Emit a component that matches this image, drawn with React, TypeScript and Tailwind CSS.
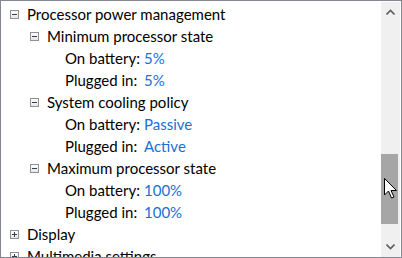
const rows: { level: number; kind: 'node' | 'leaf'; open?: boolean; label: string; value?: string }[] = [
  { level: 0, kind: 'node', open: true, label: 'Processor power management' },
  { level: 1, kind: 'node', open: true, label: 'Minimum processor state' },
  { level: 2, kind: 'leaf', label: 'On battery:', value: '5%' },
  { level: 2, kind: 'leaf', label: 'Plugged in:', value: '5%' },
  { level: 1, kind: 'node', open: true, label: 'System cooling policy' },
  { level: 2, kind: 'leaf', label: 'On battery:', value: 'Passive' },
  { level: 2, kind: 'leaf', label: 'Plugged in:', value: 'Active' },
  { level: 1, kind: 'node', open: true, label: 'Maximum processor state' },
  { level: 2, kind: 'leaf', label: 'On battery:', value: '100%' },
  { level: 2, kind: 'leaf', label: 'Plugged in:', value: '100%' },
  { level: 0, kind: 'node', open: false, label: 'Display' },
  { level: 0, kind: 'node', open: false, label: 'Multimedia settings' },
];

const ToggleBox = ({ open }: { open?: boolean }) => (
  <span className="relative flex h-[9px] w-[9px] shrink-0 items-center justify-center border border-[#919191] bg-gradient-to-b from-white to-[#e6e6e6]">
    <span className="absolute h-px w-[5px] bg-[#2f3f58]" />
    {!open && <span className="absolute h-[5px] w-px bg-[#2f3f58]" />}
  </span>
);

const indent = ['pl-[9px]', 'pl-[29px]', 'pl-[64px]'];

export default function App() {
  return (
    <div className="relative flex h-[258px] w-[402px] overflow-hidden border border-[#828790] bg-white font-['Lato',sans-serif] text-[15px] text-black">
      <div className="flex-1 pt-[2px]">
        {rows.map((r, i) => (
          <div key={i} className={`flex h-[22px] items-center whitespace-nowrap ${indent[r.level]}`}>
            {r.kind === 'node' ? (
              <>
                <ToggleBox open={r.open} />
                <span className="ml-[8px]">{r.label}</span>
              </>
            ) : (
              <>
                <span className="w-[79px]">{r.label}</span>
                <span className="text-[#1a6fd6]">{r.value}</span>
              </>
            )}
          </div>
        ))}
      </div>
      <div className="mr-px mt-px flex w-[19px] flex-col bg-[#f0f0f0]">
        <div className="flex h-[20px] items-center justify-center">
          <svg width="9" height="6" viewBox="0 0 9 6">
            <path d="M0.5 5.5 L4.5 1.5 L8.5 5.5" fill="none" stroke="#606060" strokeWidth="1.6" />
          </svg>
        </div>
        <div className="mt-[132px] h-[70px] w-[17px] bg-[#a6a6a6]" />
        <div className="flex-1" />
        <div className="flex h-[20px] items-center justify-center">
          <svg width="9" height="6" viewBox="0 0 9 6">
            <path d="M0.5 0.5 L4.5 4.5 L8.5 0.5" fill="none" stroke="#606060" strokeWidth="1.6" />
          </svg>
        </div>
      </div>
      <svg className="absolute left-[383px] top-[177px]" width="14" height="22" viewBox="0 0 14 22">
        <path d="M0.5 0.5 L0.5 17 L4.5 13 L7.5 20 L10 19 L7 12.5 L12.5 12.5 Z" fill="white" stroke="black" strokeWidth="1" strokeLinejoin="miter" />
      </svg>
    </div>
  );
}
